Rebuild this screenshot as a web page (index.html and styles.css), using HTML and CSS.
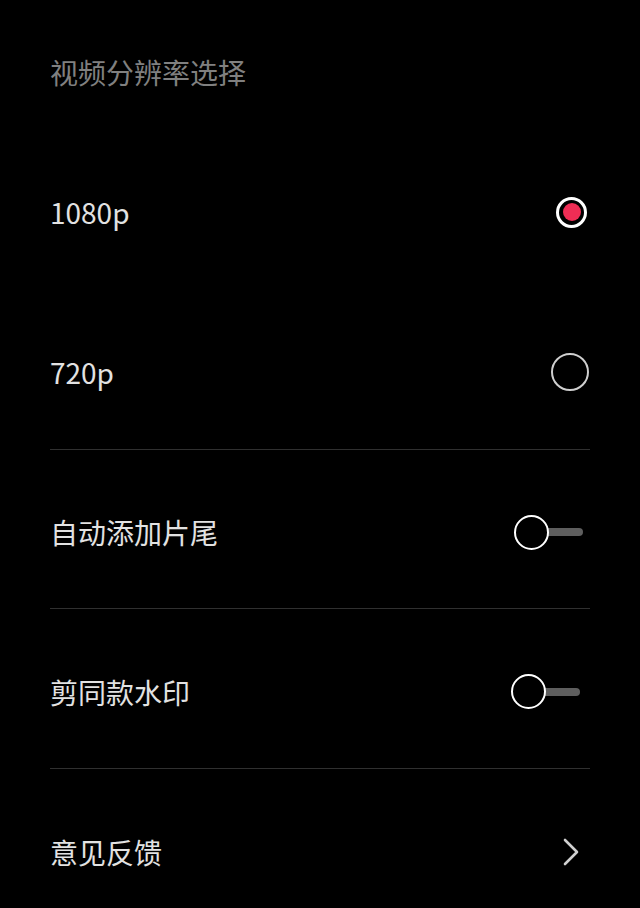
FILE: index.html
```html
<!DOCTYPE html>
<html lang="zh-CN">
<head>
<meta charset="utf-8">
<link rel="stylesheet" href="styles.css">
</head>
<body>
<div class="page">
  <div class="title">视频分辨率选择</div>
  <div class="row r1">
    <span class="label">1080p</span>
    <span class="radio on"><span class="dot"></span></span>
  </div>
  <div class="row r2 sep">
    <span class="label">720p</span>
    <span class="radio off"></span>
  </div>
  <div class="row r3 sep">
    <span class="label">自动添加片尾</span>
    <span class="toggle t1"><span class="knob"></span><span class="track"></span></span>
  </div>
  <div class="row r4 sep">
    <span class="label">剪同款水印</span>
    <span class="toggle t2"><span class="knob"></span><span class="track"></span></span>
  </div>
  <div class="row r5">
    <span class="label">意见反馈</span>
    <svg class="chev" width="18" height="28" viewBox="0 0 18 28"><path d="M3 2 L15 14 L3 26" fill="none" stroke="#d0d0d0" stroke-width="2.6" stroke-linecap="round" stroke-linejoin="round"/></svg>
  </div>
</div>
</body>
</html>
```
FILE: styles.css
```css
html, body {
  margin: 0;
  padding: 0;
  background: #000;
  height: 908px;
  overflow: hidden;
}
.page {
  padding: 0 50px;
  font-family: "Noto Sans CJK SC", "Noto Sans", sans-serif;
}
.title {
  height: 132px;
  box-sizing: border-box;
  padding-top: 52px;
  line-height: 40px;
  font-size: 28px;
  color: #808080;
  font-weight: 400;
}
.row {
  display: flex;
  align-items: center;
  justify-content: space-between;
  box-sizing: border-box;
}
.sep {
  border-bottom: 1px solid #303030;
}
.r1 { height: 160px; }
.r2 { height: 158px; padding-top: 3px; }
.r3 { height: 159px; padding-top: 6px; }
.r4 { height: 160px; padding-top: 6px; }
.r5 { height: 160px; padding-top: 6px; }
.label {
  font-size: 28px;
  color: #e2e2e2;
  line-height: 40px;
}
.radio {
  box-sizing: border-box;
  border-radius: 50%;
  display: flex;
  align-items: center;
  justify-content: center;
}
.radio.on {
  width: 31px;
  height: 31px;
  border: 3px solid #fff;
  margin-right: 3px;
}
.radio.on .dot {
  width: 18px;
  height: 18px;
  border-radius: 50%;
  background: #ef2d55;
}
.radio.off {
  width: 38px;
  height: 38px;
  border: 2.5px solid #cfcfcf;
  margin-right: 1px;
}
.toggle {
  display: flex;
  align-items: center;
  position: relative;
  width: 69px;
  height: 35px;
}
.t1 { margin-right: 7px; }
.t2 { margin-right: 10px; }
.knob {
  position: relative;
  z-index: 1;
  box-sizing: border-box;
  width: 35px;
  height: 35px;
  border-radius: 50%;
  border: 2.5px solid #fff;
  background: #000;
  flex: none;
}
.track {
  height: 8px;
  width: 52px;
  margin-left: -18px;
  border-radius: 4px;
  background: #5e5e5e;
}
.chev {
  margin-right: 10px;
}
```
